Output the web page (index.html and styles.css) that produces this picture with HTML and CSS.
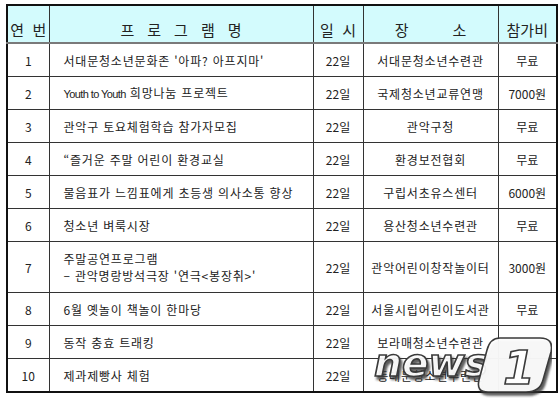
FILE: index.html
```html
<!DOCTYPE html>
<html lang="ko">
<head>
<meta charset="utf-8">
<title>프로그램 일정</title>
<link rel="stylesheet" href="styles.css">
</head>
<body>
<div class="page">
  <table class="schedule">
    <colgroup>
      <col class="w-no">
      <col class="w-prog">
      <col class="w-date">
      <col class="w-place">
      <col class="w-fee">
    </colgroup>
    <thead>
      <tr>
        <th class="h-no">연&nbsp;&nbsp;번</th>
        <th class="h-prog">프로그램명</th>
        <th class="h-date">일&nbsp;&nbsp;시</th>
        <th class="h-place">장<span class="gap"></span>소</th>
        <th class="h-fee">참가비</th>
      </tr>
    </thead>
    <tbody>
      <tr><td class="no">1</td><td class="prog">서대문청소년문화존 '아파? 아프지마'</td><td class="date">22일</td><td class="place">서대문청소년수련관</td><td class="fee">무료</td></tr>
      <tr><td class="no">2</td><td class="prog"><span class="latin">Youth to Youth</span> 희망나눔 프로젝트</td><td class="date">22일</td><td class="place">국제청소년교류연맹</td><td class="fee">7000원</td></tr>
      <tr><td class="no">3</td><td class="prog">관악구 토요체험학습 참가자모집</td><td class="date">22일</td><td class="place">관악구청</td><td class="fee">무료</td></tr>
      <tr><td class="no">4</td><td class="prog">“즐거운 주말 어린이 환경교실</td><td class="date">22일</td><td class="place">환경보전협회</td><td class="fee">무료</td></tr>
      <tr><td class="no">5</td><td class="prog">물음표가 느낌표에게 초등생 의사소통 향상</td><td class="date">22일</td><td class="place">구립서초유스센터</td><td class="fee">6000원</td></tr>
      <tr><td class="no">6</td><td class="prog">청소년 벼룩시장</td><td class="date">22일</td><td class="place">용산청소년수련관</td><td class="fee">무료</td></tr>
      <tr class="tall"><td class="no">7</td><td class="prog">주말공연프로그램<br>– 관악명랑방석극장 '연극&lt;봉장취&gt;'</td><td class="date">22일</td><td class="place">관악어린이창작놀이터</td><td class="fee">3000원</td></tr>
      <tr><td class="no">8</td><td class="prog">6월 옛놀이 책놀이 한마당</td><td class="date">22일</td><td class="place">서울시립어린이도서관</td><td class="fee">무료</td></tr>
      <tr><td class="no">9</td><td class="prog">동작 충효 트래킹</td><td class="date">22일</td><td class="place">보라매청소년수련관</td><td class="fee"></td></tr>
      <tr><td class="no">10</td><td class="prog">제과제빵사 체험</td><td class="date">22일</td><td class="place">동대문청소년수련관</td><td class="fee"></td></tr>
    </tbody>
  </table>

  <svg class="watermark" width="190" height="64" viewBox="0 0 190 64" aria-label="news1">
    <defs>
      <filter id="sh" x="-20%" y="-20%" width="140%" height="140%">
        <feDropShadow dx="2" dy="3" stdDeviation="1.2" flood-color="#333" flood-opacity="0.85"/>
      </filter>
    </defs>
    <g filter="url(#sh)">
      <text x="12" y="42" class="wm-text" textLength="114" lengthAdjust="spacingAndGlyphs">news</text>
      <path d="M138 4 H178 Q192 4 189 18 L181 46 Q178 58 164 58 H126 Q114 58 117 46 L125 16 Q128 4 138 4 Z" class="wm-box"/>
      <text x="141" y="50" class="wm-one">1</text>
    </g>
  </svg>
</div>
</body>
</html>
```

FILE: styles.css
```css
html, body {
  margin: 0;
  padding: 0;
  background: #ffffff;
}

.page {
  position: relative;
  width: 560px;
  height: 402px;
  padding: 4px 0 0 6px;
  box-sizing: border-box;
  font-family: "Noto Sans CJK KR", "Noto Sans", sans-serif;
  color: #222;
}

.schedule {
  border-collapse: collapse;
  table-layout: fixed;
  width: 550px;
  border: 2px solid #111;
}

.w-no { width: 42px; }
.w-prog { width: 264px; }
.w-date { width: 50px; }
.w-place { width: 135px; }
.w-fee { width: 59px; }

.schedule th,
.schedule td {
  border: 1px solid #333;
  padding: 0;
  overflow: hidden;
  white-space: nowrap;
}

.schedule thead th {
  background: #d3fbfd;
  height: 34px;
  font-size: 15px;
  font-weight: normal;
  color: #222;
  vertical-align: bottom;
  padding-bottom: 2px;
  line-height: 20px;
  border-bottom: 2px solid #7a7a7a;
}

.h-prog {
  letter-spacing: 13px;
  text-indent: 13px;
}

.gap {
  display: inline-block;
  width: 44px;
}

.schedule tbody td {
  height: 32px;
  font-size: 12px;
  line-height: 17px;
  text-align: center;
  vertical-align: middle;
}

.schedule tbody tr.tall td {
  height: 50px;
}

.schedule tbody td.prog {
  text-align: left;
  padding-left: 14px;
  letter-spacing: 0.8px;
}

.schedule tbody td.place {
  letter-spacing: 0.8px;
}

.latin {
  font-family: "Liberation Sans Narrow", "Liberation Sans", sans-serif;
  letter-spacing: -0.6px;
  font-size: 11px;
}

.watermark {
  position: absolute;
  left: 362px;
  top: 334px;
}

.wm-text {
  font-family: "DejaVu Sans", sans-serif;
  font-weight: bold;
  font-style: italic;
  font-size: 38px;
  fill: rgba(255, 255, 255, 0.88);
  stroke: #3a3a3a;
  stroke-width: 1.6;
}

.wm-box {
  fill: rgba(255, 255, 255, 0.9);
  stroke: #3a3a3a;
  stroke-width: 1.6;
}

.wm-one {
  font-family: "DejaVu Sans", sans-serif;
  font-weight: bold;
  font-style: italic;
  font-size: 46px;
  fill: #ffffff;
  stroke: #3a3a3a;
  stroke-width: 1.6;
}
```
